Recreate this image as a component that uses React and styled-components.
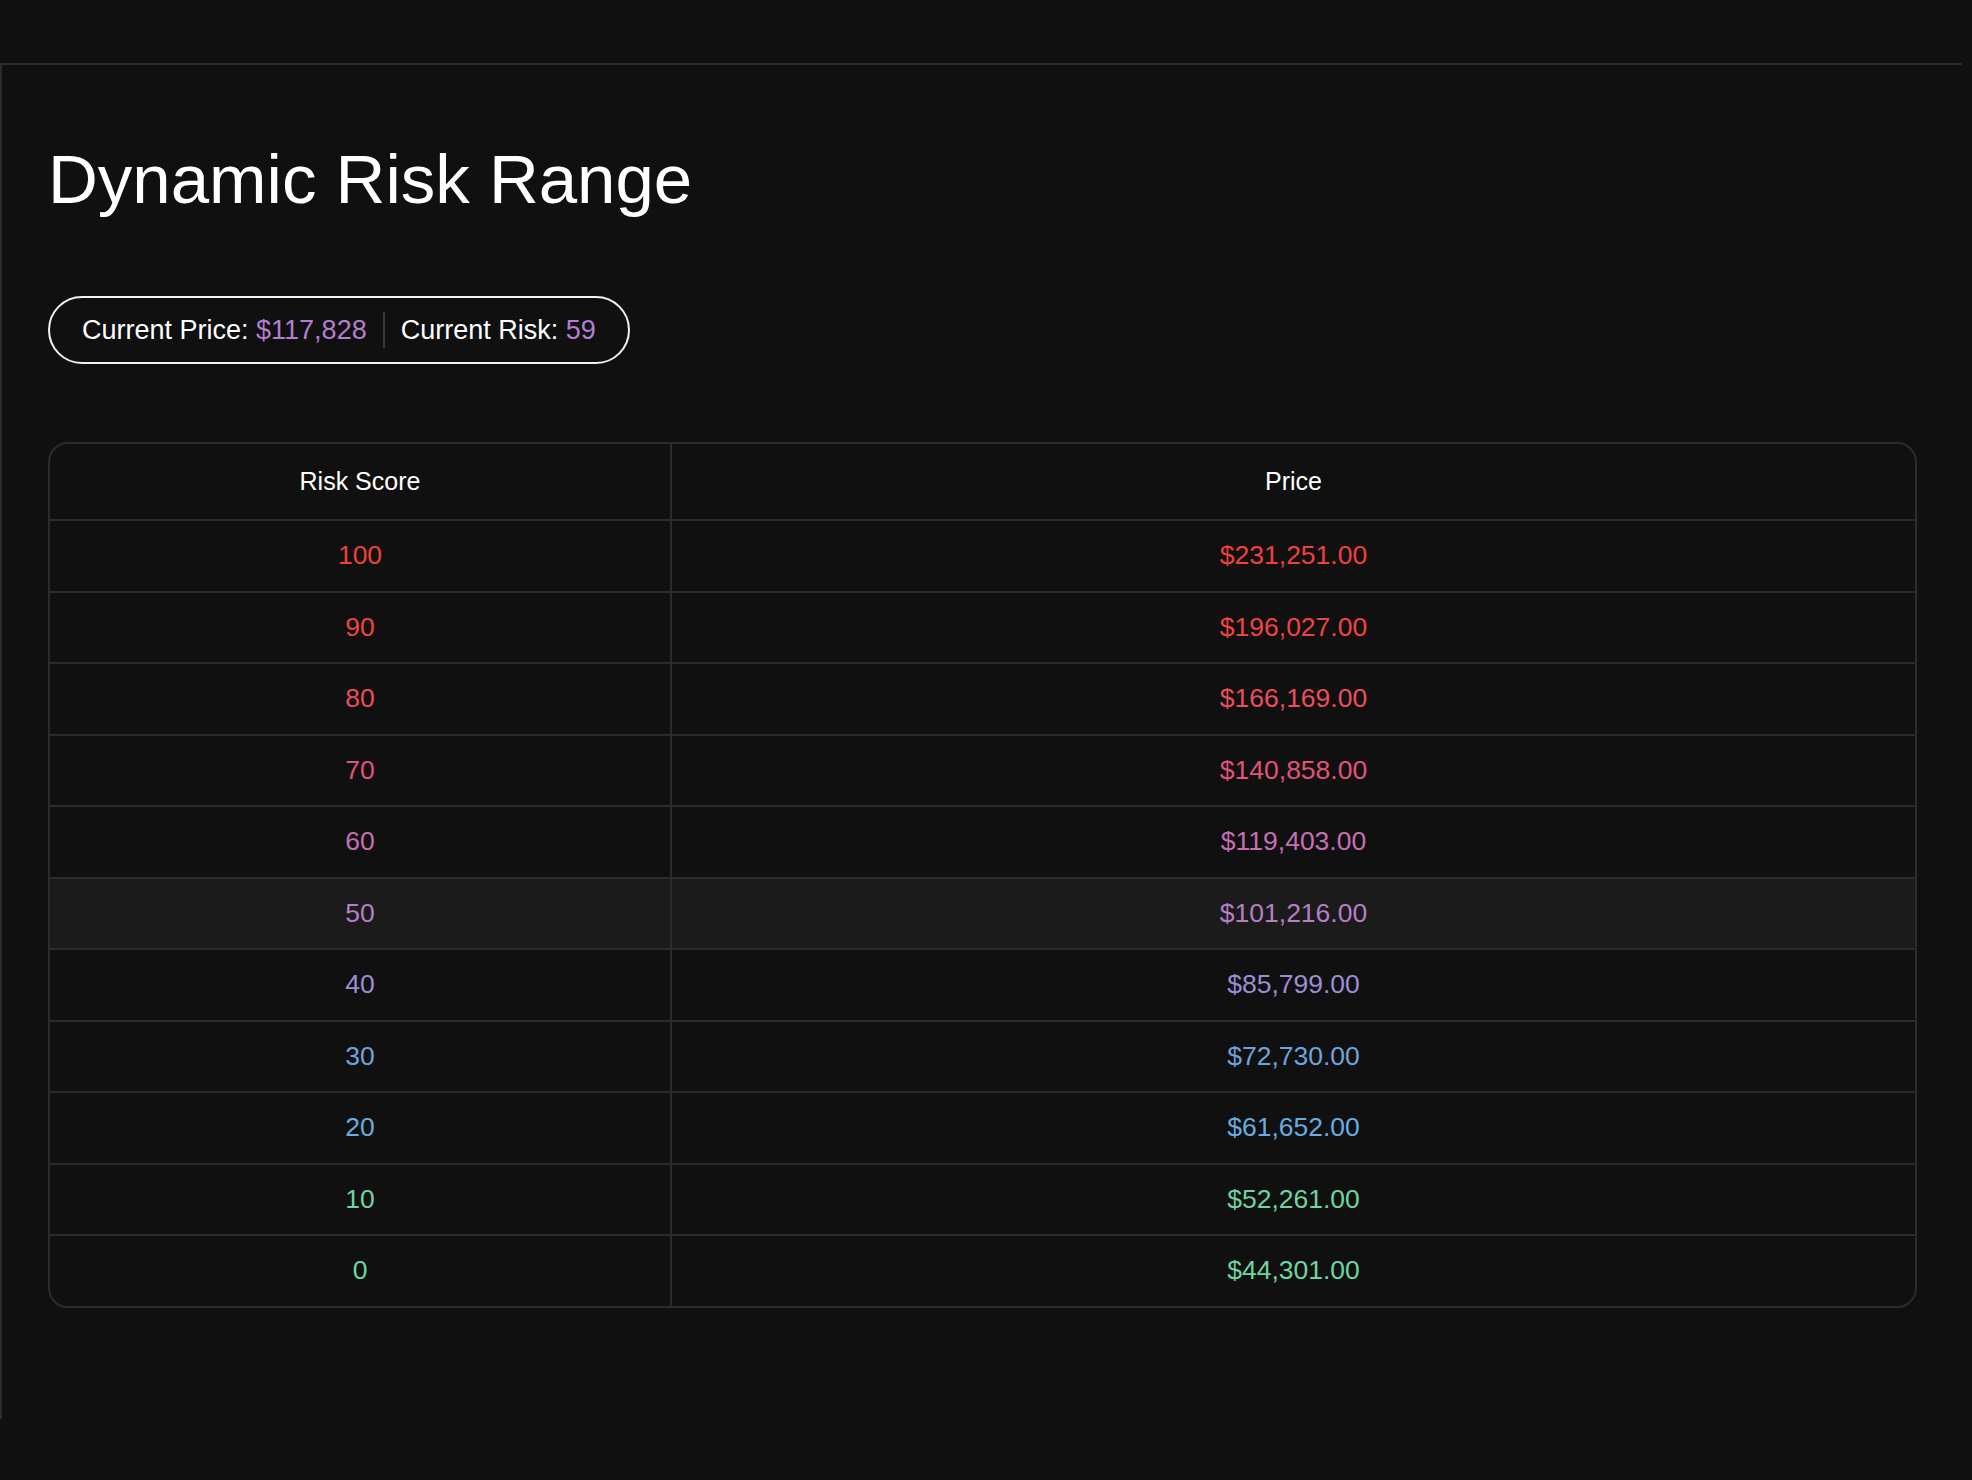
import React from "react";
import styled, { createGlobalStyle } from "styled-components";

const Global = createGlobalStyle`
  html, body { margin: 0; padding: 0; background: #101010; }
  body { font-family: "Liberation Sans", Arial, sans-serif; color: #fff; }
`;

const Page = styled.div`
  padding-top: 63px;
  height: 1480px;
  box-sizing: border-box;
`;

const Panel = styled.section`
  width: 1962px;
  height: 1356px;
  box-sizing: border-box;
  border-top: 2px solid #2b2b2b;
  border-left: 2px solid #2b2b2b;
  padding: 73px 0 0 46px;
  display: flex;
  flex-direction: column;
  align-items: flex-start;
`;

const Title = styled.h1`
  margin: 0;
  font-size: 69px;
  line-height: 83px;
  font-weight: 400;
  color: #fff;
`;

const Pill = styled.div`
  margin-top: 75px;
  display: flex;
  align-items: center;
  height: 68px;
  box-sizing: border-box;
  border: 2px solid #f2f2f2;
  border-radius: 34px;
  padding: 0 32px;
  font-size: 27px;
  color: #fff;
`;

const Accent = styled.span`
  color: #b57ed0;
`;

const Divider = styled.span`
  width: 2px;
  height: 36px;
  background: #3a3a3a;
  margin: 0 16px;
`;

const Table = styled.div`
  margin-top: 78px;
  width: 1865px;
  border: 2px solid #2b2b30;
  border-radius: 20px;
  overflow: hidden;
  display: grid;
  grid-template-columns: 622px 1fr;
`;

const Cell = styled.div`
  height: ${(p) => (p.$head ? 75 : 69.5)}px;
  display: flex;
  align-items: center;
  justify-content: center;
  font-size: ${(p) => (p.$head ? 25 : 26.5)}px;
  color: ${(p) => p.$color || "#fff"};
  background: ${(p) => (p.$hl ? "#1b1b1b" : "transparent")};
  border-top: ${(p) => (p.$head ? "none" : "2px solid #2b2b2e")};
  border-right: ${(p) => (p.$left ? "2px solid #2b2b2e" : "none")};
`;

const rows = [
  [100, "$231,251.00", "#f0403a"],
  [90, "$196,027.00", "#f04440"],
  [80, "$166,169.00", "#ec4d5c"],
  [70, "$140,858.00", "#e2537a"],
  [60, "$119,403.00", "#c76fb4"],
  [50, "$101,216.00", "#b77ec8"],
  [40, "$85,799.00", "#9b8ed6"],
  [30, "$72,730.00", "#6ea4dc"],
  [20, "$61,652.00", "#66aee0"],
  [10, "$52,261.00", "#6fd3a2"],
  [0, "$44,301.00", "#6ed5a0"],
];

export default function App() {
  return (
    <Page>
      <Global />
      <Panel>
        <Title>Dynamic Risk Range</Title>
        <Pill>
          Current Price:&nbsp;<Accent>$117,828</Accent>
          <Divider />
          Current Risk:&nbsp;<Accent>59</Accent>
        </Pill>
        <Table>
          <Cell $head $left>Risk Score</Cell>
          <Cell $head>Price</Cell>
          {rows.map(([s, p, c]) => (
            <React.Fragment key={s}>
              <Cell $left $color={c} $hl={s === 50}>{s}</Cell>
              <Cell $color={c} $hl={s === 50}>{p}</Cell>
            </React.Fragment>
          ))}
        </Table>
      </Panel>
    </Page>
  );
}
